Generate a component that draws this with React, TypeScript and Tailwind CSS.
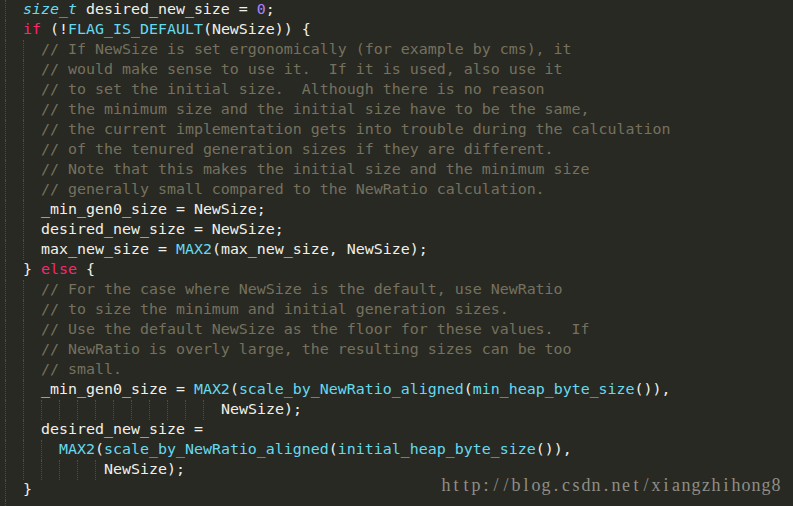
import React from "react";

type Seg = [string, string?];

const C: Record<string, string> = {
  w: "text-[#f0f0ea]",
  c: "text-[#75715e]",
  b: "text-[#66d9ef]",
  bi: "text-[#66d9ef] italic",
  r: "text-[#f92672]",
  p: "text-[#ae81ff]",
};

type LineDef = { indent: number; guides: number[]; segs: Seg[] };

const cm = (t: string): LineDef => ({ indent: 4, guides: [0, 2], segs: [[t, "c"]] });

const lines: LineDef[] = [
  { indent: 2, guides: [0], segs: [["size_t", "bi"], [" desired_new_size = "], ["0", "p"], [";"]] },
  { indent: 2, guides: [0], segs: [["if", "r"], [" (!"], ["FLAG_IS_DEFAULT", "b"], ["(NewSize)) {"]] },
  cm("// If NewSize is set ergonomically (for example by cms), it"),
  cm("// would make sense to use it.  If it is used, also use it"),
  cm("// to set the initial size.  Although there is no reason"),
  cm("// the minimum size and the initial size have to be the same,"),
  cm("// the current implementation gets into trouble during the calculation"),
  cm("// of the tenured generation sizes if they are different."),
  cm("// Note that this makes the initial size and the minimum size"),
  cm("// generally small compared to the NewRatio calculation."),
  { indent: 4, guides: [0, 2], segs: [["_min_gen0_size = NewSize;"]] },
  { indent: 4, guides: [0, 2], segs: [["desired_new_size = NewSize;"]] },
  { indent: 4, guides: [0, 2], segs: [["max_new_size = "], ["MAX2", "b"], ["(max_new_size, NewSize);"]] },
  { indent: 2, guides: [0], segs: [["} "], ["else", "r"], [" {"]] },
  cm("// For the case where NewSize is the default, use NewRatio"),
  cm("// to size the minimum and initial generation sizes."),
  cm("// Use the default NewSize as the floor for these values.  If"),
  cm("// NewRatio is overly large, the resulting sizes can be too"),
  cm("// small."),
  {
    indent: 4,
    guides: [0, 2],
    segs: [["_min_gen0_size = "], ["MAX2", "b"], ["("], ["scale_by_NewRatio_aligned", "b"], ["("], ["min_heap_byte_size", "b"], ["()),"]],
  },
  { indent: 24, guides: [0, 2, 4, 6, 8, 10, 12, 14, 16, 18, 20, 22], segs: [["NewSize);"]] },
  { indent: 4, guides: [0, 2], segs: [["desired_new_size ="]] },
  {
    indent: 6,
    guides: [0, 2, 4],
    segs: [["MAX2", "b"], ["("], ["scale_by_NewRatio_aligned", "b"], ["("], ["initial_heap_byte_size", "b"], ["()),"]],
  },
  { indent: 11, guides: [0, 2, 4, 6, 8, 10], segs: [["NewSize);"]] },
  { indent: 2, guides: [0], segs: [["}"]] },
];

function Indent({ indent, guides }: { indent: number; guides: number[] }) {
  const cells: React.ReactNode[] = [];
  for (let col = 0; col < indent; col += 2) {
    const half = indent - col === 1;
    const g = guides.includes(col);
    cells.push(
      <span
        key={col}
        className={
          (half ? "w-[9px] " : "w-[18px] ") +
          "shrink-0 self-stretch " +
          (g ? "border-l border-dotted border-[#4d4d46]" : "")
        }
      />
    );
  }
  return <>{cells}</>;
}

const WM = "http://blog.csdn.net/xiangzhihong8";

export default function App() {
  return (
    <div className="relative w-[793px] h-[506px] overflow-hidden bg-[#282923]">
      <div className="pl-[5px] flex flex-col font-['DejaVu_Sans_Mono',monospace] text-[14.95px]">
        {lines.map((l, i) => (
          <div key={i} className="flex h-[20px] leading-[20px] whitespace-pre">
            <Indent indent={l.indent} guides={l.guides} />
            <span className="-mt-[1px]">
              {l.segs.map((s, j) => (
                <span key={j} className={C[s[1] ?? "w"]}>
                  {s[0]}
                </span>
              ))}
            </span>
          </div>
        ))}
        <div className="flex h-[6px]">
          <span className="w-[18px] self-stretch border-l border-dotted border-[#4d4d46]" />
        </div>
      </div>
      <div className="absolute left-[441px] top-[475px] flex h-[20px] leading-[20px] font-['Liberation_Serif',serif] text-[18px] text-[#8e8e86]">
        {WM.split("").map((ch, i) => (
          <span key={i} className="inline-block w-[10px] text-center">
            {ch}
          </span>
        ))}
      </div>
    </div>
  );
}
